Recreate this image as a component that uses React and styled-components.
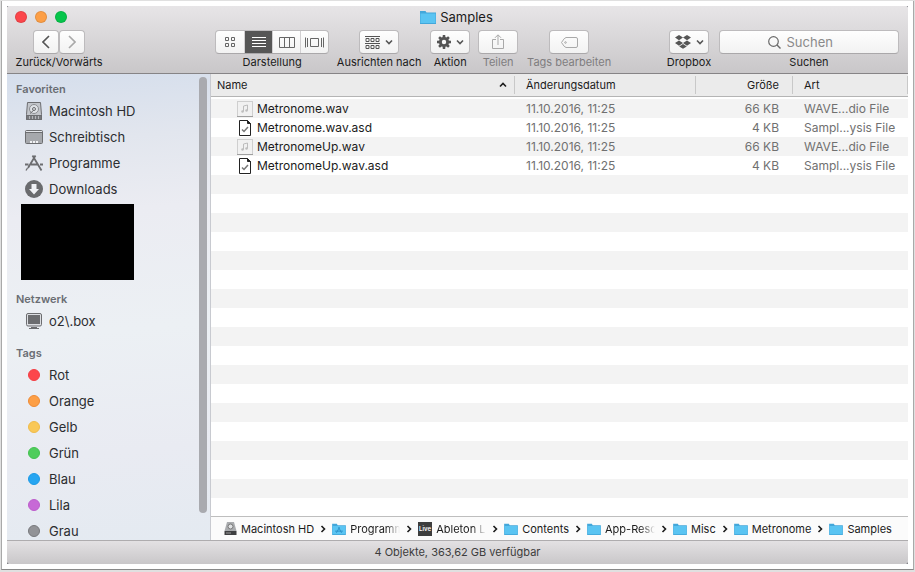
import React from "react"
import styled, { createGlobalStyle, css } from "styled-components"

const GlobalStyle = createGlobalStyle`
  * {
    box-sizing: border-box;
  }

  body {
    margin: 0;
    background: #e0e0e0;
    font-family: Inter, "Liberation Sans", sans-serif;
    font-size: 12px;
    color: #1b1b1b;
  }

  a {
    color: inherit;
    text-decoration: none;
  }

  svg {
    display: block;
    flex: none;
  }
`

const Page = styled.div`
  height: 100vh;
  padding: 1px 1px 2px;
`

const Frame = styled.div`
  height: 100%;
  padding: 5px;
  background: white;
  border: 1px solid #a9a9a9;
  border-top: none;
  border-bottom-color: #888;
`

const Desktop = styled.div`
  height: 100%;
  background: #85858a;
`

const Window = styled.main`
  height: 100%;
  display: flex;
  flex-direction: column;
  overflow: hidden;
  border-radius: 3px 3px 4px 4px;
  background: white;
`

const Header = styled.header`
  flex: none;
  height: 68px;
  padding-top: 1px;
  background: linear-gradient(#e7e5e7, #c9c7c9);
  border-bottom: 1px solid #868486;
`

const TitleBar = styled.div`
  display: grid;
  grid-template-columns: 1fr auto 1fr;
  align-items: center;
  height: 20px;
  padding: 0 10px 0 8px;
`

const Lights = styled.div`
  display: flex;
  gap: 8px;
`

const Light = styled.button`
  width: 12px;
  height: 12px;
  padding: 0;
  border: 1px solid rgba(0, 0, 0, 0.1);
  border-radius: 50%;
  background: ${props => props.$color};
`

const Title = styled.h1`
  display: flex;
  align-items: center;
  gap: 4px;
  margin: 0;
  font-size: 13px;
  font-weight: 400;
`

const Toolbar = styled.div`
  display: flex;
  gap: 8px;
  padding: 3px 9px 0 8px;
`

const Group = styled.div`
  flex: none;
  width: ${props => props.$width}px;
  display: flex;
  flex-direction: column;
  align-items: center;
  color: ${props => (props.$disabled ? "#7f7d7f" : "#1b1b1b")};
`

const Caption = styled.span`
  font-size: 11px;
  line-height: 16px;
  white-space: nowrap;
`

const Spacer = styled.div`
  flex: ${props => props.$grow};
`

const control = css`
  height: 24px;
  border: 1px solid #bdbbbd;
  border-bottom-color: #aaa8aa;
  border-radius: 4px;
  background: linear-gradient(#fefefe, #f2f2f2);
`

const Button = styled.button`
  ${control}
  display: flex;
  align-items: center;
  justify-content: center;
  gap: 5px;
  width: ${props => props.$width || 40}px;
  padding: 0;
  color: #555;

  &:disabled {
    color: #a9a9a9;
  }
`

const Pair = styled.div`
  display: flex;
`

const Segments = styled.div`
  ${control}
  display: flex;
  overflow: hidden;
`

const Segment = styled.button`
  width: 28px;
  display: flex;
  align-items: center;
  justify-content: center;
  padding: 0;
  border: none;
  border-left: 1px solid #d2d0d2;
  background: ${props => (props.$active ? "#565656" : "transparent")};
  color: ${props => (props.$active ? "#fff" : "#666")};

  &:first-child {
    border-left: none;
  }
`

const SearchBox = styled.label`
  ${control}
  display: flex;
  align-items: center;
  justify-content: center;
  gap: 6px;
  width: 180px;
  color: #6a6a6a;
`

const SearchInput = styled.input`
  width: 64px;
  padding: 0;
  border: none;
  outline: none;
  background: none;
  font-family: inherit;
  font-size: 13px;

  &::placeholder {
    color: #8a8a8a;
    opacity: 1;
  }
`

const Body = styled.div`
  flex: 1;
  min-height: 0;
  display: flex;
`

const Sidebar = styled.aside`
  flex: none;
  width: 204px;
  display: flex;
  background: linear-gradient(
    175deg,
    #d5deec 0,
    #e2e6ee 15%,
    #ebecf2 30%,
    #ecf0f4 55%,
    #e9ebf2 80%,
    #e4eaf1 100%
  );
  border-right: 1px solid #c8cad0;
`

const Places = styled.nav`
  flex: 1;
  overflow: hidden;
  padding-top: 6px;
`

const ScrollThumb = styled.div`
  width: 8px;
  margin: 3px 3px 27px 0;
  border-radius: 4px;
  background: #a9aaaf;
`

const Section = styled.section`
  margin-bottom: 10px;
`

const SectionTitle = styled.h2`
  margin: 0;
  padding-left: 9px;
  font-size: 11px;
  font-weight: 600;
  line-height: 18px;
  color: #6a6d73;
`

const Place = styled.a`
  display: flex;
  align-items: center;
  gap: 6px;
  height: 26px;
  padding-left: 18px;
  font-size: 13px;
  color: #2c2d30;
`

const Redacted = styled.div`
  width: 113px;
  height: 76px;
  margin: 2px 0 0 14px;
  background: black;
`

const Dot = styled.span`
  width: 12px;
  height: 12px;
  margin: 0 3px;
  border: 1px solid ${props => props.$edge};
  border-radius: 50%;
  background: ${props => props.$color};
`

const Content = styled.div`
  flex: 1;
  min-width: 0;
  display: flex;
  flex-direction: column;
`

const FileList = styled.div`
  flex: 1;
  min-height: 0;
  overflow: hidden;
  background: repeating-linear-gradient(#f3f3f3 0 19px, #fff 19px 38px) 0 25px
    no-repeat;
`

const Table = styled.table`
  width: 100%;
  table-layout: fixed;
  border-spacing: 0;

  thead::after {
    content: "";
    display: table-row;
    height: 2px;
  }
`

const HeadCell = styled.th`
  width: ${props => (props.$width ? props.$width + "px" : "auto")};
  height: 23px;
  padding: 0 ${props => (props.$right ? 14 : 8)}px 0
    ${props => (props.$name ? 6 : 11)}px;
  background: linear-gradient(#c8c8c8, #c8c8c8) right center / 1px 18px
      no-repeat,
    #ebebeb;
  border-bottom: 1px solid #b4b4b4;
  font-size: 11px;
  font-weight: 400;
  text-align: ${props => (props.$right ? "right" : "left")};
`

const HeadLabel = styled.span`
  display: flex;
  align-items: center;
  justify-content: space-between;
`

const Cell = styled.td`
  height: 19px;
  padding: 0 ${props => (props.$right ? 14 : 0)}px 0 11px;
  line-height: 19px;
  white-space: nowrap;
  color: #707070;
  text-align: ${props => (props.$right ? "right" : "left")};
`

const NameCell = styled(Cell)`
  padding-left: 26px;
  color: #1b1b1b;
`

const FileName = styled.span`
  display: flex;
  align-items: center;
  gap: 4px;
`

const PathBar = styled.nav`
  flex: none;
  display: flex;
  align-items: center;
  height: 24px;
  padding-left: 13px;
  background: #fbfbfb;
  border-top: 1px solid #bebebe;
  font-size: 11px;
`

const Crumb = styled.a`
  display: flex;
  align-items: center;
  gap: 4px;
  white-space: nowrap;
`

const CrumbText = styled.span`
  ${props =>
    props.$fade &&
    css`
      width: 50px;
      mask-image: linear-gradient(to right, black 72%, transparent);
    `}
`

const CrumbArrow = styled.span`
  display: flex;
  justify-content: center;
  width: 18px;
`

const StatusBar = styled.footer`
  flex: none;
  height: 24px;
  border-top: 1px solid #aeacae;
  background: linear-gradient(#e3e1e3, #c9c7c9);
  font-size: 11px;
  line-height: 23px;
  text-align: center;
  color: #3c3c3c;
`

const Chevron = ({ dir, size = 8, stroke = 1.6 }) => {
  const paths = {
    right: "M2.5 1l3 3-3 3",
    up: "M1 5.5 4 2.5l3 3",
    down: "M1 2.5l3 3 3-3"
  }
  return (
    <svg width={size} height={size} viewBox="0 0 8 8" fill="none">
      <path d={paths[dir]} stroke="currentColor" strokeWidth={stroke} />
    </svg>
  )
}

const Arrow = ({ flip }) => (
  <svg width="8" height="14" viewBox="0 0 8 14" fill="none">
    <path
      d={flip ? "M1 1l6 6-6 6" : "M7 1 1 7l6 6"}
      stroke="currentColor"
      strokeWidth="1.6"
    />
  </svg>
)

const Folder = ({ width = 14, height = 12, apps }) => (
  <svg width={width} height={height} viewBox="0 0 16 14">
    <path d="M0 1h5.5l1 1.5H16V14H0z" fill="#43a7da" />
    <path d="M.5 3.5h15v9.5H.5z" fill="#5ac4f2" />
    {apps && (
      <path
        d="M5 11.5l3.5-6.5M11 11.5l-3.5-6.5M3.5 9.5h9"
        stroke="#2c91c8"
        strokeWidth="1.1"
      />
    )}
  </svg>
)

const GridIcon = () => (
  <svg width="11" height="11" fill="none" stroke="currentColor">
    <path d="M.5.5h3v3h-3zM6.5.5h3v3h-3zM.5 6.5h3v3h-3zM6.5 6.5h3v3h-3z" />
  </svg>
)

const ListIcon = () => (
  <svg width="14" height="11" stroke="currentColor">
    <path d="M0 .5h14M0 3.5h14M0 6.5h14M0 9.5h14" />
  </svg>
)

const ColumnsIcon = () => (
  <svg width="16" height="11" fill="none" stroke="currentColor">
    <path d="M.5.5h15v10H.5zM5.5.5v10M10.5.5v10" />
  </svg>
)

const CoverIcon = () => (
  <svg width="19" height="11" fill="none" stroke="currentColor">
    <path d="M.5.5v10M2.5 1v9M5.5 1.5h8v8h-8zM16.5 1v9M18.5.5v10" />
  </svg>
)

const ArrangeIcon = () => (
  <svg width="15" height="13" fill="none" stroke="currentColor">
    <path d="M0 .5h15M0 7.5h15" />
    {[0, 1, 2].map(i => (
      <path
        key={i}
        d={`M${i * 5 + 1} 2.5h3v3h-3zM${i * 5 + 1} 9.5h3v3h-3z`}
      />
    ))}
  </svg>
)

const GearIcon = () => (
  <svg width="14" height="14" viewBox="-7 -7 14 14">
    <circle r="3.6" fill="none" stroke="currentColor" strokeWidth="2.8" />
    {[0, 45, 90, 135].map(a => (
      <path
        key={a}
        d="M-1.2-7h2.4l.3 3h-3zM-1.2 7h2.4l.3-3h-3z"
        fill="currentColor"
        transform={`rotate(${a})`}
      />
    ))}
  </svg>
)

const ShareIcon = () => (
  <svg width="12" height="16" fill="none" stroke="currentColor">
    <path d="M4 5.5H.5v9h11v-9H8M6 11V1M3 3.8 6 .8l3 3" />
  </svg>
)

const TagIcon = () => (
  <svg width="17" height="11" fill="none" stroke="currentColor">
    <path d="M5 .5h10q1.5 0 1.5 1.5v7q0 1.5-1.5 1.5H5Q3.5 10.5.5 5.5 3.5.5 5 .5z" />
    <circle cx="4.5" cy="5.5" r=".8" />
  </svg>
)

const DropboxIcon = () => (
  <svg width="16" height="14" viewBox="0 0 16 14" fill="currentColor">
    <path d="M4 0l4 2.6-4 2.6L0 2.6zM12 0l4 2.6-4 2.6-4-2.6zM4 5.5l4 2.6-4 2.6L0 8.1zM12 5.5l4 2.6-4 2.6-4-2.6zM8 9l3.8 2.4L8 13.8l-3.8-2.4z" />
  </svg>
)

const SearchIcon = () => (
  <svg width="13" height="13" fill="none" stroke="currentColor">
    <circle cx="5.5" cy="5.5" r="4.8" strokeWidth="1.2" />
    <path d="M9 9l3.5 3.5" strokeWidth="1.4" />
  </svg>
)

const DriveIcon = () => (
  <svg width="18" height="18" fill="none" stroke="#6c6d70">
    <path d="M2.5.5h13l1 12v5h-15v-5z" fill="#c3c6cb" />
    <circle cx="9" cy="7" r="4.5" fill="#dfe2e6" stroke="#8b8d91" />
    <circle cx="9" cy="7" r="1.5" />
    <path d="M9 8l-4 3.5" />
    <path d="M1.5 13.5h15v4h-15z" fill="#77797d" />
    <path d="M4.5 14v3M7.5 14v3M10.5 14v3M13.5 14v3" stroke="#b3b5b9" />
  </svg>
)

const DesktopIcon = () => (
  <svg width="18" height="14" fill="none" stroke="#6c6d70">
    <rect x=".5" y=".5" width="17" height="13" rx="1" fill="#a6a8ac" />
    <path d="M1 1.5h16" stroke="#e4e6ea" />
    <path d="M1 2.5h16" />
    <path d="M5 12h9" stroke="#f2f3f5" strokeWidth="2" strokeDasharray="2 1" />
  </svg>
)

const AppsIcon = () => (
  <svg width="18" height="16" fill="none" stroke="#6c6d70" strokeWidth="1.8">
    <path d="M7.5.5 15 13l1.5 2.5M10.5.5 3 13M0 9.5h3.5M6 9.5h6.5M15 9.5h3" />
    <path d="M2.5 13 1 15.5" strokeWidth="1.3" />
  </svg>
)

const DownloadsIcon = () => (
  <svg width="18" height="18">
    <circle cx="9" cy="9" r="9" fill="#6a6b6e" />
    <path d="M6.5 4h5v5H14l-5 5.5L4 9h2.5z" fill="#f0f1f5" />
  </svg>
)

const ScreenIcon = () => (
  <svg width="18" height="16" fill="none" stroke="#6c6d70">
    <rect x="1.5" y=".5" width="15" height="12.5" rx="1.5" fill="#dcdee2" />
    <rect x="3.5" y="2.5" width="11" height="8" fill="#6c6d70" />
    <path d="M6 14.5h6M4 15.5h10" />
  </svg>
)

const AudioFileIcon = () => (
  <svg width="16" height="16" fill="none">
    <rect x=".5" y=".5" width="15" height="15" fill="#f1f1f1" stroke="#cfcfcf" />
    <path d="M0 15.5h16" stroke="#9f9f9f" />
    <path d="M6.5 10.5V5l4-1v5.5" stroke="#bdbdbd" />
    <circle cx="5.5" cy="10.5" r="1.2" fill="#bdbdbd" />
    <circle cx="9.5" cy="9.5" r="1.2" fill="#bdbdbd" />
  </svg>
)

const DocIcon = () => (
  <svg width="16" height="16" fill="none">
    <path d="M2.5.5h8l3 3v12h-11z" fill="#fff" stroke="#222" />
    <path d="M10.5.5v3h3z" fill="#222" stroke="#222" />
    <path d="M5 9.5l2 2 4-4.5" stroke="#777" strokeWidth="1.5" />
  </svg>
)

const SmallDrive = () => (
  <svg width="13" height="13" fill="none">
    <path d="M3 0h7l2.5 9H.5z" fill="#a9abae" />
    <circle cx="6.5" cy="4.5" r="2.5" fill="#dfe1e3" stroke="#777" />
    <path d="M.5 9h12v4H.5z" fill="#3e3f41" />
    <path d="M2 11h5" stroke="#9a9a9a" />
  </svg>
)

const LiveIcon = () => (
  <svg width="14" height="14">
    <rect width="14" height="14" fill="#3d3d3d" />
    <text
      x="7"
      y="9"
      fill="#fff"
      fontSize="6"
      fontWeight="600"
      textAnchor="middle"
    >
      Live
    </text>
  </svg>
)

const tags = [
  ["Rot", "#fc464b", "#f43f45"],
  ["Orange", "#fd9f46", "#ee8a35"],
  ["Gelb", "#f9c858", "#efbb4b"],
  ["Grün", "#4fcd5c", "#43c250"],
  ["Blau", "#26a5f1", "#1c9ae6"],
  ["Lila", "#c769d6", "#bd5dcc"],
  ["Grau", "#929397", "#77787c"]
]

const favorites = [
  ["Macintosh HD", DriveIcon],
  ["Schreibtisch", DesktopIcon],
  ["Programme", AppsIcon],
  ["Downloads", DownloadsIcon]
]

const files = [
  ["Metronome.wav", "66 KB", "WAVE...dio File"],
  ["Metronome.wav.asd", "4 KB", "Sampl...ysis File"],
  ["MetronomeUp.wav", "66 KB", "WAVE...dio File"],
  ["MetronomeUp.wav.asd", "4 KB", "Sampl...ysis File"]
]

// long names are shortened and fade out at the end
const crumbs = [
  { name: "Macintosh HD", icon: <SmallDrive /> },
  { name: "Programm", icon: <Folder apps />, fade: true },
  { name: "Ableton L", icon: <LiveIcon />, fade: true },
  { name: "Contents" },
  { name: "App-Reso", fade: true },
  { name: "Misc" },
  { name: "Metronome" },
  { name: "Samples" }
]

const FinderToolbar = () => (
  <Toolbar>
    <Group $width={88}>
      <Pair>
        <Button $width={26} aria-label="Zurück">
          <Arrow />
        </Button>
        <Button $width={26} aria-label="Vorwärts" disabled>
          <Arrow flip />
        </Button>
      </Pair>
      <Caption>Zurück/Vorwärts</Caption>
    </Group>
    <Spacer $grow={5} />
    <Group $width={112}>
      <Segments>
        <Segment aria-label="Symbole">
          <GridIcon />
        </Segment>
        <Segment aria-label="Liste" $active>
          <ListIcon />
        </Segment>
        <Segment aria-label="Spalten">
          <ColumnsIcon />
        </Segment>
        <Segment aria-label="Cover Flow">
          <CoverIcon />
        </Segment>
      </Segments>
      <Caption>Darstellung</Caption>
    </Group>
    <Group $width={86}>
      <Button aria-label="Ausrichten nach">
        <ArrangeIcon />
        <Chevron dir="down" />
      </Button>
      <Caption>Ausrichten nach</Caption>
    </Group>
    <Group $width={40}>
      <Button aria-label="Aktion">
        <GearIcon />
        <Chevron dir="down" />
      </Button>
      <Caption>Aktion</Caption>
    </Group>
    <Group $width={40} $disabled>
      <Button aria-label="Teilen" disabled>
        <ShareIcon />
      </Button>
      <Caption>Teilen</Caption>
    </Group>
    <Group $width={86} $disabled>
      <Button aria-label="Tags bearbeiten" disabled>
        <TagIcon />
      </Button>
      <Caption>Tags bearbeiten</Caption>
    </Group>
    <Spacer $grow={2} />
    <Group $width={44}>
      <Button aria-label="Dropbox">
        <DropboxIcon />
        <Chevron dir="down" />
      </Button>
      <Caption>Dropbox</Caption>
    </Group>
    <Group $width={180}>
      <SearchBox>
        <SearchIcon />
        <SearchInput type="text" placeholder="Suchen" aria-label="Suchen" />
      </SearchBox>
      <Caption>Suchen</Caption>
    </Group>
  </Toolbar>
)

const App = () => (
  <Page>
    <GlobalStyle />
    <Frame>
      <Desktop>
        <Window>
          <Header>
            <TitleBar>
              <Lights>
                <Light $color="#fc464b" aria-label="Schließen" />
                <Light $color="#fd9f46" aria-label="Minimieren" />
                <Light $color="#06c54b" aria-label="Vergrößern" />
              </Lights>
              <Title>
                <Folder width={16} height={14} />
                Samples
              </Title>
            </TitleBar>
            <FinderToolbar />
          </Header>
          <Body>
            <Sidebar>
              <Places>
                <Section>
                  <SectionTitle>Favoriten</SectionTitle>
                  {favorites.map(([name, Icon]) => (
                    <Place key={name} href="#">
                      <Icon />
                      {name}
                    </Place>
                  ))}
                  <Redacted />
                </Section>
                <Section>
                  <SectionTitle>Netzwerk</SectionTitle>
                  <Place href="#">
                    <ScreenIcon />
                    {"o2\\.box"}
                  </Place>
                </Section>
                <Section>
                  <SectionTitle>Tags</SectionTitle>
                  {tags.map(([name, color, edge]) => (
                    <Place key={name} href="#">
                      <Dot $color={color} $edge={edge} />
                      {name}
                    </Place>
                  ))}
                </Section>
              </Places>
              <ScrollThumb />
            </Sidebar>
            <Content>
              <FileList>
                <Table>
                  <thead>
                    <tr>
                      <HeadCell $name>
                        <HeadLabel>
                          Name
                          <Chevron dir="up" />
                        </HeadLabel>
                      </HeadCell>
                      <HeadCell $width={181}>Änderungsdatum</HeadCell>
                      <HeadCell $width={97} $right>
                        Größe
                      </HeadCell>
                      <HeadCell $width={115}>Art</HeadCell>
                    </tr>
                  </thead>
                  <tbody>
                    {files.map(([name, size, kind]) => (
                      <tr key={name}>
                        <NameCell>
                          <FileName>
                            {name.endsWith(".asd") ? (
                              <DocIcon />
                            ) : (
                              <AudioFileIcon />
                            )}
                            {name}
                          </FileName>
                        </NameCell>
                        <Cell>11.10.2016, 11:25</Cell>
                        <Cell $right>{size}</Cell>
                        <Cell>{kind}</Cell>
                      </tr>
                    ))}
                  </tbody>
                </Table>
              </FileList>
              <PathBar>
                {crumbs.map(({ name, icon, fade }, i) => (
                  <React.Fragment key={name}>
                    {i > 0 && (
                      <CrumbArrow>
                        <Chevron dir="right" />
                      </CrumbArrow>
                    )}
                    <Crumb href="#">
                      {icon || <Folder />}
                      <CrumbText $fade={fade}>{name}</CrumbText>
                    </Crumb>
                  </React.Fragment>
                ))}
              </PathBar>
            </Content>
          </Body>
          <StatusBar>4 Objekte, 363,62 GB verfügbar</StatusBar>
        </Window>
      </Desktop>
    </Frame>
  </Page>
)

export default App
